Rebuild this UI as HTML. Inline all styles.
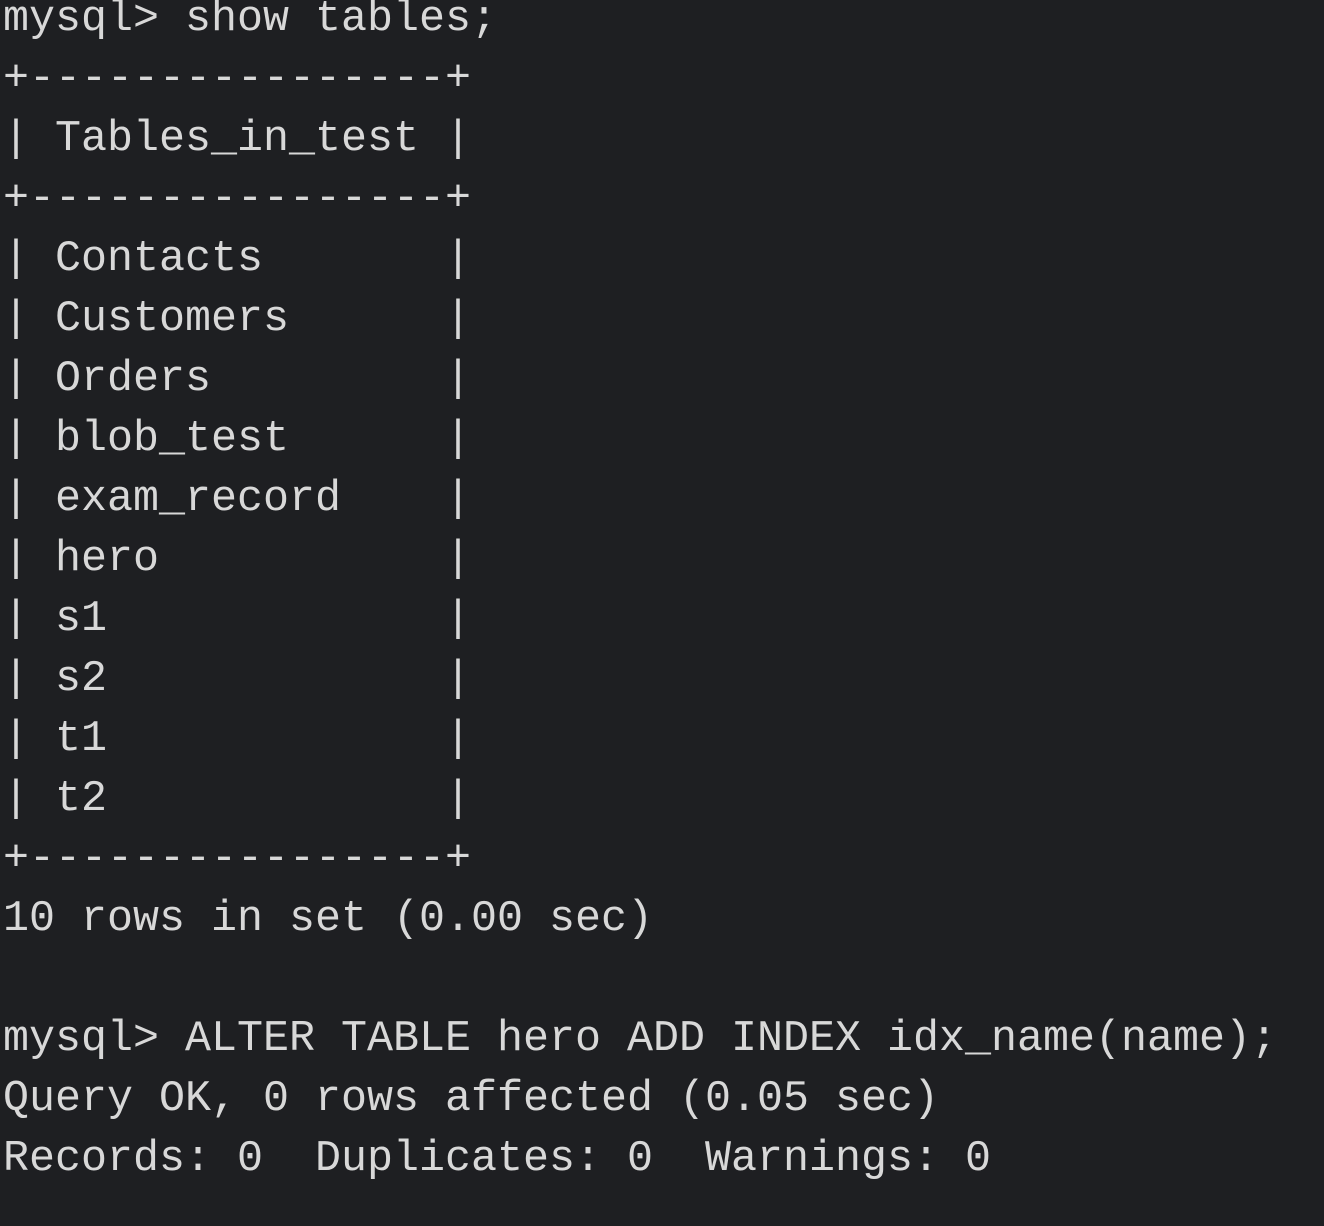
<!DOCTYPE html>
<html><head><meta charset="utf-8"><style>
html,body{margin:0;padding:0;background:#1e1f22;width:1324px;height:1226px;overflow:hidden}
pre{position:absolute;left:3px;top:-10.5px;margin:0;font-family:"Liberation Mono","DejaVu Sans Mono",monospace;font-size:43.33px;line-height:60px;color:#d8d8d8;white-space:pre}
</style></head><body><pre>mysql&gt; show tables;
+----------------+
| Tables_in_test |
+----------------+
| Contacts       |
| Customers      |
| Orders         |
| blob_test      |
| exam_record    |
| hero           |
| s1             |
| s2             |
| t1             |
| t2             |
+----------------+
10 rows in set (0.00 sec)

mysql&gt; ALTER TABLE hero ADD INDEX idx_name(name);
Query OK, 0 rows affected (0.05 sec)
Records: 0  Duplicates: 0  Warnings: 0
</pre></body></html>
